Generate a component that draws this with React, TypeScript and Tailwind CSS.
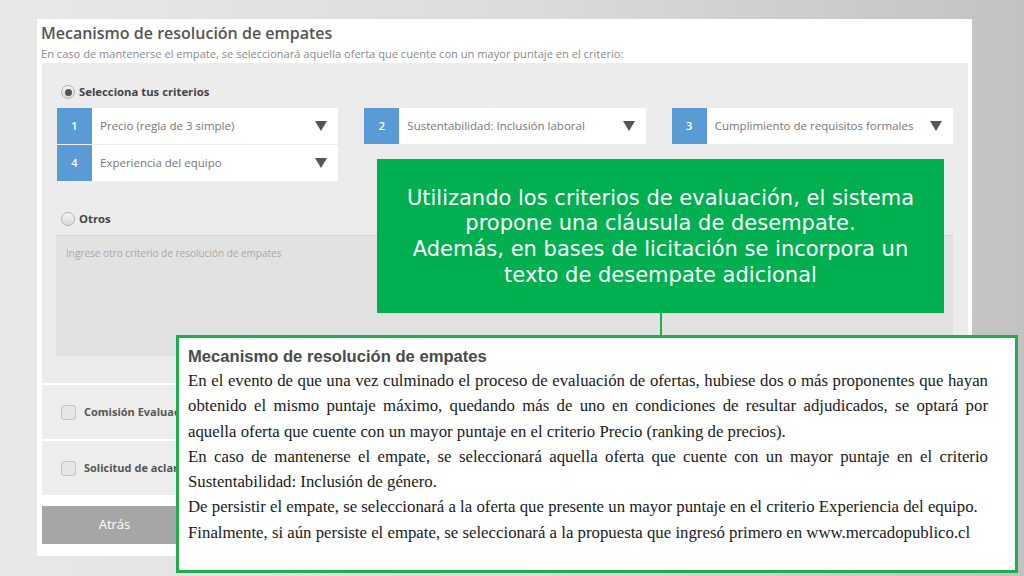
import React from "react";

const criterios = [
  { n: 1, label: "Precio (regla de 3 simple)" },
  { n: 2, label: "Sustentabilidad: Inclusión laboral" },
  { n: 3, label: "Cumplimiento de requisitos formales" },
  { n: 4, label: "Experiencia del equipo" },
];

const docLines: { text: string; justify: boolean }[] = [
  {
    text: "En el evento de que una vez culminado el proceso de evaluación de ofertas, hubiese dos o más proponentes que hayan",
    justify: true,
  },
  {
    text: "obtenido el mismo puntaje máximo, quedando más de uno en condiciones de resultar adjudicados, se optará por",
    justify: true,
  },
  {
    text: "aquella oferta que cuente con un mayor puntaje en el criterio Precio (ranking de precios).",
    justify: false,
  },
  {
    text: "En caso de mantenerse el empate, se seleccionará aquella oferta que cuente con un mayor puntaje en el criterio",
    justify: true,
  },
  { text: "Sustentabilidad: Inclusión de género.", justify: false },
  {
    text: "De persistir el empate, se seleccionará a la oferta que presente un mayor puntaje en el criterio Experiencia del equipo.",
    justify: false,
  },
  {
    text: "Finalmente, si aún persiste el empate, se seleccionará a la propuesta que ingresó primero en www.mercadopublico.cl",
    justify: false,
  },
];

function Arrow() {
  return (
    <svg width="12" height="10" viewBox="0 0 12 10" className="shrink-0">
      <path d="M0 0 H12 L6 10 Z" fill="#555555" />
    </svg>
  );
}

function Radio({ checked }: { checked: boolean }) {
  return (
    <span className="w-[14px] h-[14px] rounded-full border border-[#b5b5b5] bg-gradient-to-b from-[#f4f4f4] to-[#d9d9d9] flex items-center justify-center shrink-0">
      {checked && <span className="w-[7px] h-[7px] rounded-full bg-[#555]" />}
    </span>
  );
}

function Checkbox() {
  return (
    <span className="w-[15px] h-[15px] rounded-[3px] border border-[#c4c4c4] bg-[#e6e6e6] shrink-0" />
  );
}

function CriterioSelect({ n, label }: { n: number; label: string }) {
  return (
    <div className="flex h-[36px] bg-white items-stretch">
      <div className="w-[35px] bg-[#5b9bd5] text-white text-[11px] font-semibold flex items-center justify-center">
        {n}
      </div>
      <div className="flex-1 flex items-center justify-between pl-[8px] pr-[11px]">
        <span className="text-[11.5px] text-[#777]">{label}</span>
        <Arrow />
      </div>
    </div>
  );
}

export default function App() {
  return (
    <div
      className="relative w-[1024px] h-[576px] overflow-hidden bg-gradient-to-r from-[#e8e8e8] via-[#dcdcdc] to-[#c2c2c2] pt-[19px] pl-[37px]"
      style={{ fontFamily: '"Open Sans", "Noto Sans", sans-serif' }}
    >
      {/* tarjeta principal */}
      <div className="w-[935px] h-[537px] bg-white flex flex-col pl-[4px] pr-[4px]">
        <h1 className="text-[16px] leading-[22px] mt-[3px] font-semibold text-[#555]">
          Mecanismo de resolución de empates
        </h1>
        <p className="text-[11.1px] leading-[14px] mt-[3px] text-[#8a8a8a]">
          En caso de mantenerse el empate, se seleccionará aquella oferta que cuente con un mayor puntaje en el criterio:
        </p>

        <div className="mt-[2px] ml-[1px] bg-[#ececec] pt-[21px] pb-[27px] px-[15px]">
          <div className="flex items-center gap-[4px] h-[16px] pl-[4px]">
            <Radio checked />
            <span className="text-[11.3px] font-bold text-[#444]">Selecciona tus criterios</span>
          </div>
          <div className="grid grid-cols-3 gap-x-[26px] gap-y-[1px] mt-[8px]">
            <CriterioSelect n={1} label={criterios[0].label} />
            <CriterioSelect n={2} label={criterios[1].label} />
            <CriterioSelect n={3} label={criterios[2].label} />
            <CriterioSelect n={4} label={criterios[3].label} />
          </div>

          <div className="flex items-center gap-[4px] h-[16px] pl-[4px] mt-[30px]">
            <Radio checked={false} />
            <span className="text-[11.3px] font-bold text-[#444]">Otros</span>
          </div>
          <div className="mt-[8px] -ml-[1px] h-[121px] bg-[#e2e2e2] border-t border-[#d4d4d4] px-[10px] pt-[3px]">
            <span className="text-[10px] text-[#a8a8a8]">
              Ingrese otro criterio de resolución de empates
            </span>
          </div>
        </div>

        <div className="ml-[1px] mt-[2px] h-[54px] bg-[#ededed] flex items-center gap-[8px] pl-[19px]">
          <Checkbox />
          <span className="text-[11px] font-bold text-[#555]">Comisión Evaluadora</span>
        </div>
        <div className="ml-[1px] mt-[2px] h-[54px] bg-[#ededed] flex items-center gap-[8px] pl-[19px]">
          <Checkbox />
          <span className="text-[11px] font-bold text-[#555]">Solicitud de aclaraciones</span>
        </div>

        <div className="ml-[1px] mt-[11px] flex">
          <button className="w-[145px] h-[38px] bg-[#a6a6a6] text-white text-[13px]">
            Atrás
          </button>
        </div>
      </div>

      {/* recuadro verde explicativo */}
      <div className="absolute left-[377px] top-[159px] w-[567px] h-[154px] bg-[#00b050] flex items-center justify-center">
        <p
          className="text-white text-center text-[21px] leading-[25.7px] pt-[2px] whitespace-nowrap"
          style={{ fontFamily: '"DejaVu Sans", Verdana, sans-serif' }}
        >
          Utilizando los criterios de evaluación, el sistema
          <br />
          propone una cláusula de desempate.
          <br />
          Además, en bases de licitación se incorpora un
          <br />
          texto de desempate adicional
        </p>
      </div>
      <div className="absolute left-[660px] top-[313px] w-[2px] h-[24px] bg-[#1fae4b]" />

      {/* texto de bases */}
      <div className="absolute left-[176px] top-[335px] w-[842px] h-[238px] bg-white border-[3px] border-[#1fae4b] pl-[9px] pt-[8px]">
        <div
          className="text-[16.6px] leading-[22px] font-bold text-[#4a4a4a]"
          style={{ fontFamily: '"Liberation Sans", Arial, sans-serif' }}
        >
          Mecanismo de resolución de empates
        </div>
        <div
          className="text-[16.8px] leading-[25.3px] text-[#1a1a1a] w-[800px]"
          style={{ fontFamily: '"Liberation Serif", "Times New Roman", serif' }}
        >
          {docLines.map((l, i) => (
            <div
              key={i}
              className={
                l.justify
                  ? "whitespace-nowrap text-justify [text-align-last:justify]"
                  : "whitespace-nowrap"
              }
            >
              {l.text}
            </div>
          ))}
        </div>
      </div>
    </div>
  );
}
